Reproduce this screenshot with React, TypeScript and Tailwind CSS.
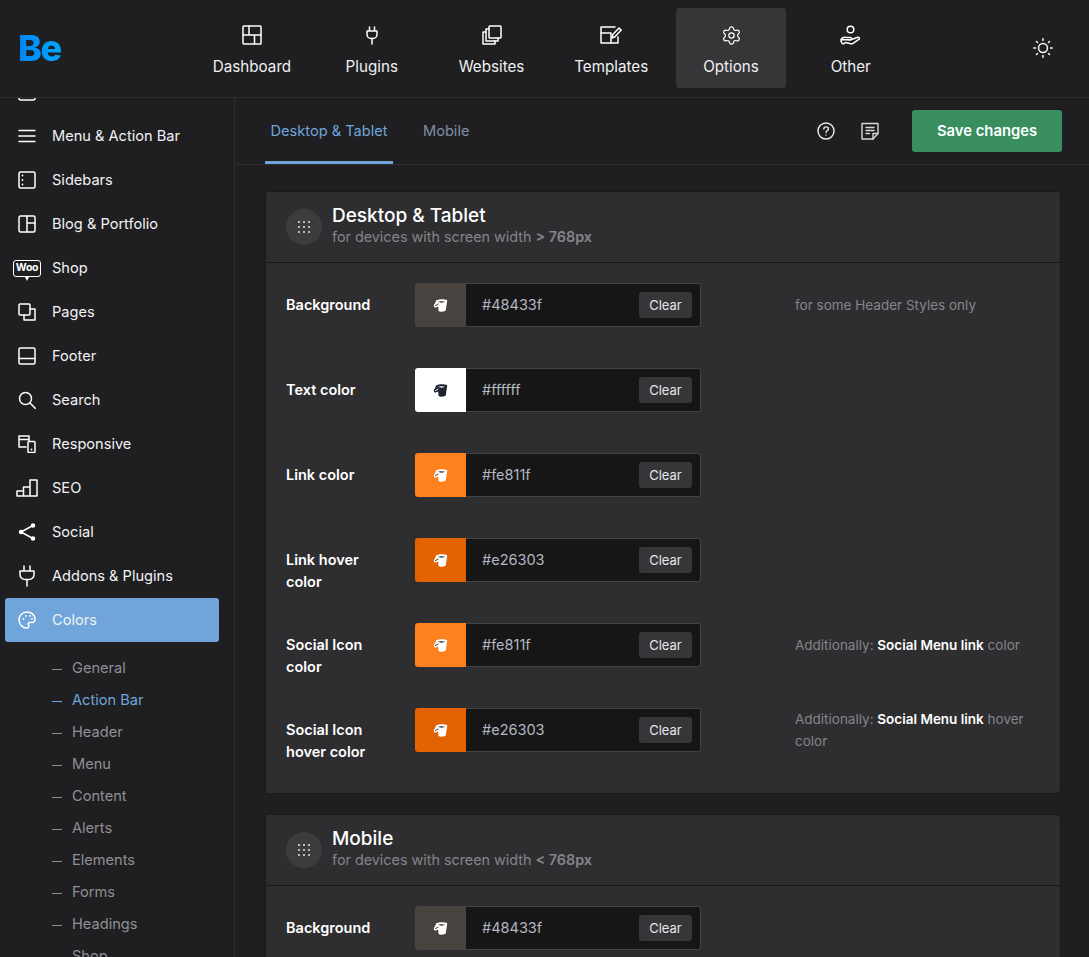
import React from "react";
import { Settings } from "lucide-react";

const font = { fontFamily: "Inter, 'Open Sans', sans-serif" };

const S = ({ children, size = 20, h, vb = "0 0 20 20", sw = 1.5 }: { children: React.ReactNode; size?: number; h?: number; vb?: string; sw?: number }) => (
  <svg width={size} height={h ?? size} viewBox={vb} fill="none" stroke="currentColor" strokeWidth={sw} strokeLinecap="round" strokeLinejoin="round">
    {children}
  </svg>
);

const Dashboard = () => <S><rect x="1" y="1" width="18" height="18" rx=".8" /><path d="M1 10h18M7 1v9M12.500 10v9" /></S>;
const Plug = () => <S><path d="M7.500 2v4M12.500 2v4M5 6h10v3.500a4 4 0 0 1-4 4H9a4 4 0 0 1-4-4zM10 13.500V19" /></S>;
const Websites = () => <S><rect x="7" y="1" width="12" height="12" rx=".8" /><path d="M7 4H4v12h12v-3" /><path d="M4 7H1v12h12v-3" /></S>;
const Templates = () => <S size={22} h={20} vb="0 0 22 20"><path d="M15 2H1v16h17v-6" /><path d="M1 8h10M11 8v10" /><path d="M12 13l.8-3.500 6.200-6.500 2.200 2-6.200 6.700z" /></S>;
const Gear = () => <Settings size={21} strokeWidth={1.4} />;
const Other = () => <S size={21} vb="0 0 21 21"><circle cx="10.500" cy="4.500" r="3.300" /><path d="M1 14.500c1.500-2 3.500-2.500 5.500-2h4c1.500 0 1.500 2.500 0 2.500H8M11 14.800l6-2.300c2.300-.6 3.200 1 1.500 2.200l-5.500 3.600c-1 .6-2 .6-3 .3L5.500 17.500 3.500 19C2 19 .8 16.500 1 14.500z" /></S>;
const Sun = () => <S size={20} vb="0 0 18 18" sw={1.3}><circle cx="9" cy="9" r="4" /><path d="M9 .7v1.500M9 15.800v1.500M.7 9h1.500M15.800 9h1.500M3.100 3.100l1 1M13.900 13.900l1 1M3.100 14.900l1-1M13.900 4.100l1-1" /></S>;
const Help = () => <S size={18} vb="0 0 18 18" sw={1.4}><circle cx="9" cy="9" r="8" /><path d="M6.800 7c.2-2.800 4.600-2.800 4.600 0 0 1.700-2.400 1.700-2.400 3.400" /><path d="M9 13v.1" /></S>;
const Note = () => <S size={18} vb="0 0 18 18" sw={1.4}><path d="M1 1.500h16v10l-5 5.500H1z" /><path d="M12 17v-5.500h5M5 5.500h8M5 8.500h8M5 11.500h3.500" /></S>;

const Menu = () => <S size={18} vb="0 0 18 18"><path d="M1 3.500h16M1 9h16M1 14.500h16" /></S>;
const Sidebars = () => <S size={18} vb="0 0 18 18"><rect x="1" y="1" width="16" height="16" rx="1.500" /><path d="M4.500 4.500v.1M4.500 9v.1M4.500 13.500v.1" strokeWidth={1.800} /></S>;
const Blog = () => <S size={18} vb="0 0 18 18"><rect x="1" y="1" width="16" height="16" rx="1.500" /><path d="M9 1v16M9 8h8" /></S>;
const Woo = () => (
  <span className="relative flex h-[17px] w-[28px] items-center justify-center rounded-[3px] border-[1.5px] border-white">
    <span className="text-[10.5px] font-bold leading-none tracking-[-0.3px] text-white">Woo</span>
    <span className="absolute -bottom-[5px] left-[11px] h-0 w-0 border-x-[2.5px] border-t-[4px] border-x-transparent border-t-white" />
  </span>
);
const Pages = () => <S size={18} vb="0 0 18 18"><rect x="1" y="1" width="11" height="11" rx="1" /><path d="M12 6h5v11H6v-5" /></S>;
const Footer = () => <S size={18} vb="0 0 18 18"><rect x="1" y="1" width="16" height="16" rx="1.500" /><path d="M1 11.500h16" /></S>;
const Search = () => <S size={18} vb="0 0 18 18"><circle cx="7.500" cy="7.500" r="6" /><path d="M12 12l5.500 5.500" /></S>;
const Responsive = () => <S size={18} vb="0 0 18 18"><path d="M11 6V1H1v11h7M1 4.500h10" /><rect x="10" y="6.500" width="7" height="11" rx="1" /><path d="M13.500 14.500v.1" strokeWidth={1.800} /></S>;
const Seo = () => <S size={22} h={18} vb="0 0 22 18"><path d="M1 17v-5h6.500v5zM7.500 17V8h6.500v9zM14 17V1h7v16z" /></S>;
const Social = () => (
  <S size={18} vb="0 0 18 18">
    <path d="M15 2.500L3 9l12 6.500" />
    <circle cx="15" cy="2.500" r="1.500" fill="currentColor" />
    <circle cx="3" cy="9" r="1.500" fill="currentColor" />
    <circle cx="15" cy="15.500" r="1.500" fill="currentColor" />
  </S>
);
const BigPlug = () => <S size={16} h={22} vb="0 0 16 22"><path d="M5 1v5M11 1v5M1 6h14v3.500a5 5 0 0 1-5 5H6a5 5 0 0 1-5-5zM8 14.500V21" /></S>;
const Palette = () => <S size={18} vb="0 0 18 18"><path d="M9 1c4.500 0 8 3.200 8 7 .2 2.500-1.500 3.500-3.200 3.500h-2.300c-1.300 0-1.800 1.500-1 2.300.8.900.3 3.200-1.500 3.200C4.500 17 1 13.500 1 9s3.500-8 8-8z" /><path d="M5.500 8v.1M8 4.800v.1M12 4.800v.1M14 8v.1" strokeWidth={1.800} /></S>;
const TopCut = () => <S size={18} vb="0 0 18 18"><rect x="1" y="1" width="16" height="16" rx="1.500" /><path d="M1 5h16" /></S>;

const Bucket = ({ dark = false }: { dark?: boolean }) => {
  const a = dark ? "#1b2430" : "#ffffff";
  const b = dark ? "#ffffff" : "#2b2b2e";
  return (
    <svg width="15" height="15" viewBox="0 0 14 14">
      <path d="M3 2.200C5.500.8 10.500.8 13.300 2L12 11.300c-.3 1.500-5.300 2.200-6.800.8L4.800 8 1.800 9C.4 8.300.4 6 1.800 5.200z" fill={a} />
      <path d="M4.300 3.600c2-.8 5-.8 7.300 0-2 1-5.300 1-7.300 0z" fill={b} />
      <path d="M2 7.200l3-1.700" stroke={b} strokeWidth=".9" />
    </svg>
  );
};

const Grip = () => (
  <svg width="14" height="14" viewBox="0 0 14 14" fill="#e4e4e6">
    {[2, 7, 12].flatMap((y) => [2, 7, 12].map((x) => <circle key={`${x}-${y}`} cx={x} cy={y} r="1" />))}
  </svg>
);

const navItems: [string, React.ReactNode, boolean][] = [
  ["Dashboard", <Dashboard />, false],
  ["Plugins", <Plug />, false],
  ["Websites", <Websites />, false],
  ["Templates", <Templates />, false],
  ["Options", <Gear />, true],
  ["Other", <Other />, false],
];

const side: [string, React.ReactNode, boolean][] = [
  ["", <TopCut />, false],
  ["Menu & Action Bar", <Menu />, false],
  ["Sidebars", <Sidebars />, false],
  ["Blog & Portfolio", <Blog />, false],
  ["Shop", <Woo />, false],
  ["Pages", <Pages />, false],
  ["Footer", <Footer />, false],
  ["Search", <Search />, false],
  ["Responsive", <Responsive />, false],
  ["SEO", <Seo />, false],
  ["Social", <Social />, false],
  ["Addons & Plugins", <BigPlug />, false],
  ["Colors", <Palette />, true],
];

const subs = ["General", "Action Bar", "Header", "Menu", "Content", "Alerts", "Elements", "Forms", "Headings", "Shop"];

type Row = { label: React.ReactNode; hex: string; note?: React.ReactNode };

const ColorRow = ({ label, hex, note }: Row) => (
  <div className="flex h-[85px] items-start">
    <div className="w-[129px] pt-[11px] text-[14.5px] font-semibold leading-[22px] text-white">{label}</div>
    <div className="flex h-[44px] w-[286px] items-stretch">
      <div className="flex w-[51px] items-center justify-center rounded-l-[3px]" style={{ backgroundColor: hex }}>
        <Bucket dark={hex === "#ffffff"} />
      </div>
      <div className="flex flex-1 items-center justify-between rounded-r-[3px] border border-l-0 border-[#434346] bg-[#161617] pl-[16px] pr-[8px]">
        <span className="text-[14.5px] text-[#b3b6c0]">{hex}</span>
        <span className="flex h-[26px] w-[53px] items-center justify-center rounded-[3px] bg-[#363639] pt-[1px] text-[13px] text-[#e6e6e8]">Clear</span>
      </div>
    </div>
    {note && <div className="ml-[94px] flex h-[44px] w-[240px] items-center text-[13.5px] leading-[22px] text-[#85858a]"><p>{note}</p></div>}
  </div>
);

const CardHead = ({ title, sign }: { title: string; sign: string }) => (
  <div className="flex h-[71px] items-center border-b border-[#19191b] pl-[20px]">
    <div className="mr-[10px] flex h-[36px] w-[36px] items-center justify-center rounded-full bg-[#3c3c3f]">
      <Grip />
    </div>
    <div className="-mt-[4px]">
      <div className="pt-[1px] text-[19px] font-medium leading-[22px] text-white">{title}</div>
      <div className="text-[14.35px] leading-[19px] text-[#858589]">
        for devices with screen width <b className="font-semibold">{sign} 768px</b>
      </div>
    </div>
  </div>
);

export default function App() {
  return (
    <div style={font} className="flex h-[957px] w-[1089px] flex-col overflow-hidden bg-[#1f1f22] text-white">
      <header className="flex h-[98px] shrink-0 items-center border-b border-[#2e2e31] pb-[1px]">
        <div className="w-[197px] shrink-0 pl-[18px]">
          <span className="bg-gradient-to-r from-[#0085f5] to-[#00a6ff] bg-clip-text text-[36px] font-extrabold leading-none tracking-[-1.5px] text-transparent">Be</span>
        </div>
        <nav className="flex gap-[9.75px]">
          {navItems.map(([t, ic, on]) => (
            <div key={t} className={`flex h-[80px] w-[110px] flex-col items-center rounded-[3px] pt-[17px] ${on ? "bg-[#363639]" : ""}`}>
              <span className="flex h-[20px] items-center">{ic}</span>
              <span className="mt-[12px] text-[15.2px] leading-[20px] text-[#f0f0f2]">{t}</span>
            </div>
          ))}
        </nav>
        <div className="ml-[127.25px]"><Sun /></div>
      </header>

      <div className="flex min-h-0 flex-1">
        <aside className="w-[235px] shrink-0 overflow-hidden border-r border-[#2e2e31]">
          <div className="-mt-[28px] pl-[5px] pr-[15px]">
            {side.map(([t, ic, on], i) => (
              <div key={i} className={`flex h-[44px] items-center rounded-[3px] ${on ? "bg-[#6fa5da]" : ""}`}>
                <span className="mr-[3px] flex w-[44px] shrink-0 justify-center">{ic}</span>
                <span className="pt-[2px] text-[14.6px] text-[#f2f2f4]">{t}</span>
              </div>
            ))}
            <div className="mt-[10px]">
              {subs.map((t, i) => (
                <div key={t} className={`flex h-[32px] items-center pl-[47px] pt-[2px] text-[14.6px] ${i === 1 ? "text-[#6fa5da]" : "text-[#8f8f94]"}`}>
                  <span className={`mr-[10px] h-px w-[10px] ${i === 1 ? "bg-[#6fa5da]" : "bg-[#8f8f94]"}`} />
                  {t}
                </div>
              ))}
            </div>
          </div>
        </aside>

        <main className="min-w-0 flex-1 overflow-hidden">
          <div className="flex h-[67px] items-stretch border-b border-[#2e2e31] pl-[30px]">
            <div className="flex w-[128px] items-center justify-center border-b-[3px] border-[#6fa5da] pt-[5px] text-[14.6px] text-[#6fa5da]">Desktop &amp; Tablet</div>
            <div className="ml-[30px] flex items-center pt-[1px] text-[14.6px] text-[#7d8fa6]">Mobile</div>
            <div className="ml-auto flex items-center pb-[1px] pr-[27px]">
              <span className="mr-[26px] text-[#eeeeef]"><Help /></span>
              <span className="mr-[33px] text-[#d8d8da]"><Note /></span>
              <span className="flex h-[42px] w-[150px] items-center justify-center rounded-[3px] bg-[#388e5f] pt-[2px] text-[14.8px] font-semibold text-white">Save changes</span>
            </div>
          </div>

          <div className="flex flex-col gap-[20px] pl-[30px] pt-[26px]">
            <section className="w-[796px] rounded-[3px] border border-[#19191b] bg-[#2e2e31]">
              <CardHead title="Desktop & Tablet" sign=">" />
              <div className="px-[20px] pt-[20px]">
                <ColorRow label="Background" hex="#48433f" note="for some Header Styles only" />
                <ColorRow label="Text color" hex="#ffffff" />
                <ColorRow label="Link color" hex="#fe811f" />
                <ColorRow label={<>Link hover<br />color</>} hex="#e26303" />
                <ColorRow label={<>Social Icon<br />color</>} hex="#fe811f" note={<>Additionally: <b className="font-semibold text-white">Social Menu link</b> color</>} />
                <ColorRow label={<>Social Icon<br />hover color</>} hex="#e26303" note={<>Additionally: <b className="font-semibold text-white">Social Menu link</b> hover color</>} />
              </div>
            </section>
            <section className="w-[796px] rounded-[3px] border border-[#19191b] bg-[#2e2e31]">
              <CardHead title="Mobile" sign="<" />
              <div className="px-[20px] pt-[20px]">
                <ColorRow label="Background" hex="#48433f" />
              </div>
            </section>
          </div>
        </main>
      </div>
    </div>
  );
}
